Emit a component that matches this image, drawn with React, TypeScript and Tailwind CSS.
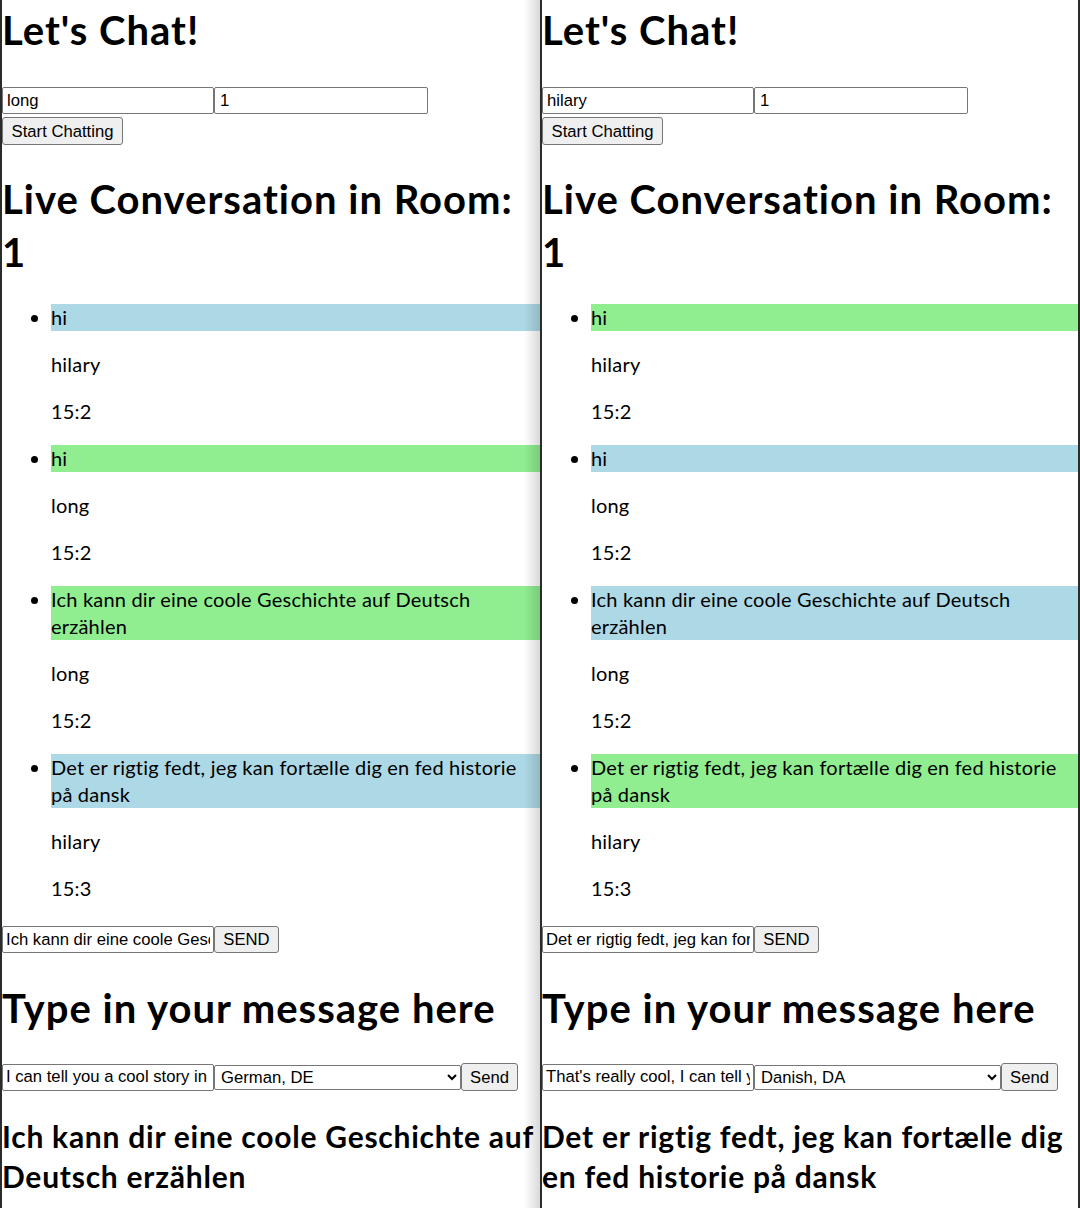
import React from 'react';

type Msg = { text: string; user: string; time: string; mine: boolean };

const uiFont = { fontFamily: 'Lato, "Noto Sans", sans-serif' };
const ctlFont = { fontFamily: '"Liberation Sans", Arial, sans-serif' };

interface PaneProps {
  name: string;
  messages: Msg[];
  draft: string;
  compose: string;
  language: string;
  translated: string;
  last?: boolean;
}

function Pane({ name, messages, draft, compose, language, translated, last }: PaneProps) {
  return (
    <div
      className={`relative w-[540px] shrink-0 overflow-hidden bg-white text-black border-l-2 border-[#2b2b2b] ${
        last ? 'border-r-2' : ''
      }`}
      style={uiFont}
    >
      {/* title */}
      <h1 className="mt-[4px] text-[40px] leading-[53px] font-bold tracking-[0.025em]">Let's Chat!</h1>

      {/* join form */}
      <div className="mt-[30px] flex" style={ctlFont}>
        <input
          defaultValue={name}
          className="w-[212px] h-[27px] px-[4px] text-[16.67px] border border-[#767676] rounded-[2px] bg-white outline-none"
        />
        <input
          defaultValue="1"
          className="w-[214px] h-[27px] px-[5px] text-[16.67px] border border-[#767676] rounded-[2px] bg-white outline-none"
        />
      </div>
      <div className="mt-[3px] flex" style={ctlFont}>
        <button className="h-[28px] w-[121px] text-[16.67px] bg-[#efefef] border border-[#767676] rounded-[3px]">
          Start Chatting
        </button>
      </div>

      {/* conversation */}
      <h2 className="mt-[28px] text-[40px] leading-[53px] font-bold tracking-[0.025em]">
        Live Conversation in Room: 1
      </h2>
      <ul className="mt-[25px] pl-[49px] list-disc text-[20px] leading-[27px] tracking-[0.01em]">
        {messages.map((m, i) => (
          <li key={i} className={i < messages.length - 1 ? 'mb-[20px]' : ''}>
            <p className={m.mine ? 'bg-[#90ee90]' : 'bg-[#add8e6]'}>{m.text}</p>
            <p className="mt-[20px]">{m.user}</p>
            <p className="mt-[20px]">{m.time}</p>
          </li>
        ))}
      </ul>

      <div className="mt-[24px] flex" style={ctlFont}>
        <input
          defaultValue={draft}
          className="w-[212px] h-[27px] px-[3px] text-[16.67px] border border-[#767676] rounded-[2px] bg-white outline-none"
        />
        <button className="h-[27px] w-[65px] text-[16.67px] bg-[#efefef] border border-[#767676] rounded-[3px]">
          SEND
        </button>
      </div>

      {/* translate box */}
      <h2 className="mt-[29px] text-[40px] leading-[53px] font-bold tracking-[0.025em]">
        Type in your message here
      </h2>
      <div className="mt-[28px] flex items-center" style={ctlFont}>
        <input
          defaultValue={compose}
          className="w-[212px] h-[27px] px-[3px] text-[16.67px] border border-[#767676] rounded-[2px] bg-white outline-none"
        />
        <select
          defaultValue={language}
          className="w-[247px] h-[25px] pl-[2px] text-[16.67px] border border-[#767676] rounded-[2px] bg-white outline-none"
        >
          <option>{language}</option>
        </select>
        <button className="h-[28px] w-[57px] text-[16.67px] bg-[#efefef] border border-[#767676] rounded-[3px]">
          Send
        </button>
      </div>
      <h3 className="mt-[25px] text-[30px] leading-[40px] font-bold tracking-[0.025em]">{translated}</h3>
      <div className="h-[40px]" />

      {/* window edge shadow */}
      {!last && (
        <div className="absolute top-0 bottom-0 right-0 w-[16px] bg-gradient-to-r from-transparent to-black/15" />
      )}
    </div>
  );
}

export default function App() {
  const de = 'Ich kann dir eine coole Geschichte auf Deutsch erzählen';
  const da = 'Det er rigtig fedt, jeg kan fortælle dig en fed historie på dansk';

  const left: Msg[] = [
    { text: 'hi', user: 'hilary', time: '15:2', mine: false },
    { text: 'hi', user: 'long', time: '15:2', mine: true },
    { text: de, user: 'long', time: '15:2', mine: true },
    { text: da, user: 'hilary', time: '15:3', mine: false },
  ];
  const right: Msg[] = left.map((m) => ({ ...m, mine: !m.mine }));

  return (
    <div className="flex w-[1080px] h-[1208px] overflow-hidden bg-white">
      <Pane
        name="long"
        messages={left}
        draft={de}
        compose="I can tell you a cool story in German"
        language="German, DE"
        translated={de}
      />
      <Pane
        name="hilary"
        messages={right}
        draft={da}
        compose="That's really cool, I can tell you a cool story in Danish"
        language="Danish, DA"
        translated={da}
        last
      />
    </div>
  );
}
